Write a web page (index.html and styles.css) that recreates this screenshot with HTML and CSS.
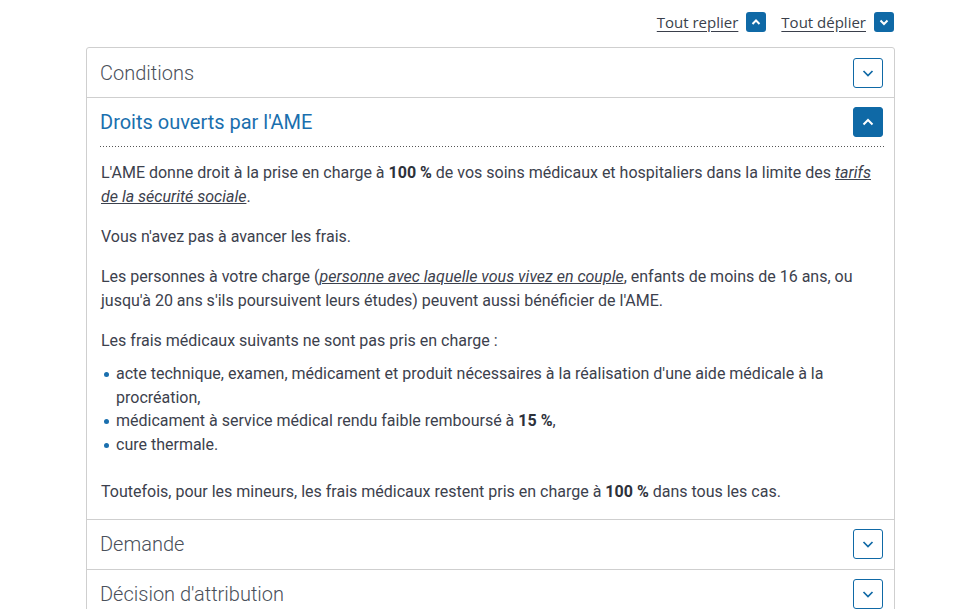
FILE: index.html
```html
<!DOCTYPE html>
<html lang="fr">
<head>
<meta charset="utf-8">
<title>AME</title>
<link rel="stylesheet" href="styles.css">
</head>
<body>
<div class="page">
  <div class="toolbar">
    <a class="tool" href="#"><span class="tool-label">Tout replier</span><span class="tool-btn"><svg width="12" height="12" viewBox="0 0 12 12"><path d="M2.5 8 L6 4.5 L9.5 8" fill="none" stroke="#fff" stroke-width="2"/></svg></span></a>
    <a class="tool" href="#"><span class="tool-label">Tout déplier</span><span class="tool-btn"><svg width="12" height="12" viewBox="0 0 12 12"><path d="M2.5 4.5 L6 8 L9.5 4.5" fill="none" stroke="#fff" stroke-width="2"/></svg></span></a>
  </div>
  <div class="accordion">
    <div class="item">
      <div class="head">
        <span class="title">Conditions</span>
        <span class="btn"><svg width="14" height="14" viewBox="0 0 14 14"><path d="M2.5 5 L7 9.5 L11.5 5" fill="none" stroke="#0f69a6" stroke-width="1.7"/></svg></span>
      </div>
    </div>
    <div class="item open">
      <div class="head">
        <span class="title">Droits ouverts par l'AME</span>
        <span class="btn filled"><svg width="14" height="14" viewBox="0 0 14 14"><path d="M2.5 9.5 L7 5 L11.5 9.5" fill="none" stroke="#fff" stroke-width="2"/></svg></span>
      </div>
      <div class="content">
        <p>L'AME donne droit à la prise en charge à <strong>100 %</strong> de vos soins médicaux et hospitaliers dans la limite des <a href="#">tarifs de la sécurité sociale</a>.</p>
        <p>Vous n'avez pas à avancer les frais.</p>
        <p>Les personnes à votre charge (<a href="#">personne avec laquelle vous vivez en couple</a>, enfants de moins de 16 ans, ou jusqu'à 20 ans s'ils poursuivent leurs études) peuvent aussi bénéficier de l'AME.</p>
        <p class="intro">Les frais médicaux suivants ne sont pas pris en charge :</p>
        <ul>
          <li>acte technique, examen, médicament et produit nécessaires à la réalisation d'une aide médicale à la procréation,</li>
          <li>médicament à service médical rendu faible remboursé à <strong>15 %</strong>,</li>
          <li>cure thermale.</li>
        </ul>
        <p class="last">Toutefois, pour les mineurs, les frais médicaux restent pris en charge à <strong>100 %</strong> dans tous les cas.</p>
      </div>
    </div>
    <div class="item">
      <div class="head">
        <span class="title">Demande</span>
        <span class="btn"><svg width="14" height="14" viewBox="0 0 14 14"><path d="M2.5 5 L7 9.5 L11.5 5" fill="none" stroke="#0f69a6" stroke-width="1.7"/></svg></span>
      </div>
    </div>
    <div class="item">
      <div class="head">
        <span class="title">Décision d'attribution</span>
        <span class="btn"><svg width="14" height="14" viewBox="0 0 14 14"><path d="M2.5 5 L7 9.5 L11.5 5" fill="none" stroke="#0f69a6" stroke-width="1.7"/></svg></span>
      </div>
    </div>
  </div>
</div>
</body>
</html>
```

FILE: styles.css
```css
* { box-sizing: border-box; }
body {
  margin: 0;
  background: #fff;
  font-family: Roboto, "Liberation Sans", sans-serif;
  color: #3c414d;
}
.page {
  width: 809px;
  margin-left: 86px;
  padding-top: 12px;
}
.toolbar {
  display: flex;
  justify-content: flex-end;
  gap: 15px;
  height: 20px;
  margin-bottom: 15px;
  padding-right: 1px;
}
.tool {
  display: flex;
  align-items: center;
  gap: 8px;
  text-decoration: none;
}
.tool-label {
  font-family: "Open Sans", "Liberation Sans", sans-serif;
  font-size: 15px;
  color: #3a3f4b;
  text-decoration: underline;
  text-underline-offset: 3px;
}
.tool-btn {
  width: 20px;
  height: 20px;
  border-radius: 3px;
  background: #0f69a6;
  display: flex;
  align-items: center;
  justify-content: center;
}
.accordion {
  border: 1px solid #cfcfcf;
  border-radius: 3px 3px 0 0;
}
.item { border-bottom: 1px solid #cfcfcf; }
.item:last-child { border-bottom: none; }
.head {
  height: 49px;
  padding: 0 11px 0 13px;
  display: flex;
  align-items: center;
  justify-content: space-between;
}
.title {
  font-size: 20px;
  font-weight: 300;
  color: #4a505a;
}
.btn {
  width: 30px;
  height: 30px;
  border: 1px solid #0f69a6;
  border-radius: 3px;
  display: flex;
  align-items: center;
  justify-content: center;
}
.btn.filled { background: #0f69a6; }
.open .head {
  height: 49px;
  margin: 0 9px 0 13px;
  padding: 0 2px 1px 0;
  background-image: linear-gradient(to right, #555 1px, transparent 1px);
  background-size: 3px 1px;
  background-repeat: repeat-x;
  background-position: left bottom;
}
.open .title { color: #1a6fae; font-weight: 400; }
.content {
  padding: 14px 9px 15px 14px;
  font-size: 16px;
  line-height: 24px;
}
.content p { margin: 0 0 16px; }
.content p.intro { margin-bottom: 9px; }
.content p.last { margin: 0; }
.content strong { font-weight: 700; color: #2d313a; }
.content a {
  color: #3c414d;
  font-style: italic;
  text-decoration: underline;
}
.content ul {
  list-style: none;
  margin: 0 0 23px;
  padding: 0 0 0 15px;
}
.content li {
  position: relative;
  line-height: 23.7px;
}
.content li::before {
  content: "";
  position: absolute;
  left: -12px;
  top: 10px;
  width: 5px;
  height: 5px;
  border-radius: 50%;
  background: #1a6fae;
}
```
